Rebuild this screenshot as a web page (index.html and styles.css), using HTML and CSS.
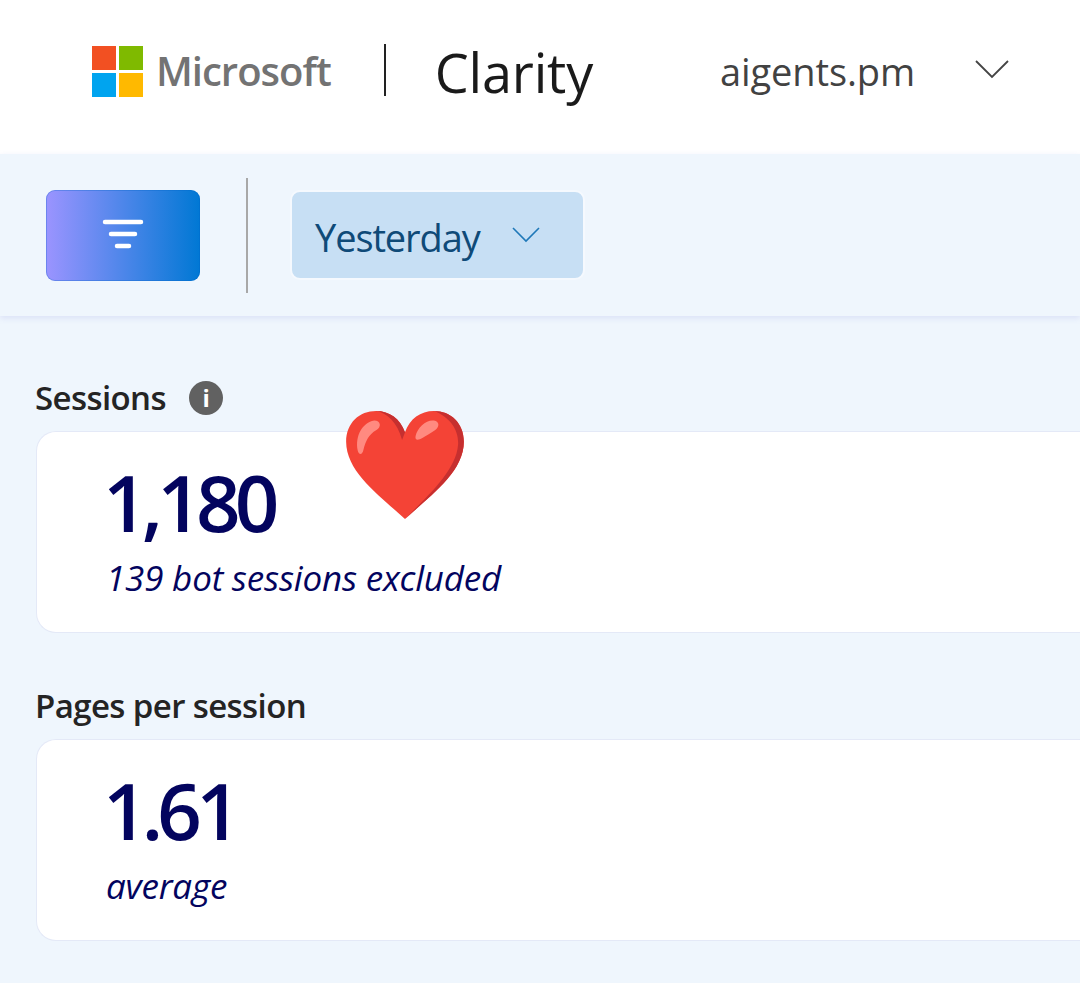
FILE: index.html
```html
<!DOCTYPE html>
<html lang="en">
<head>
    <meta charset="UTF-8">
    <meta name="viewport" content="width=device-width, initial-scale=1.0">
    <title>Microsoft Clarity</title>
    <link rel="stylesheet" href="styles.css">
</head>
<body>
    <header class="header">
        <div class="ms-logo">
            <span class="ms-red"></span>
            <span class="ms-green"></span>
            <span class="ms-blue"></span>
            <span class="ms-yellow"></span>
        </div>
        <span class="ms-name">Microsoft</span>
        <span class="header-divider"></span>
        <span class="product-name">Clarity</span>
        <span class="project-name">aigents.pm</span>
        <svg class="project-chevron" width="34" height="20" viewBox="0 0 34 20">
            <path d="M1 2 L17 18 L33 2" fill="none" stroke="#444" stroke-width="1.8"/>
        </svg>
    </header>

    <section class="toolbar">
        <button class="filter-btn">
            <svg width="42" height="32" viewBox="0 0 42 32">
                <path d="M3 3 H39 M9 15 H33 M15 27 H27" fill="none" stroke="#fff" stroke-width="4.5" stroke-linecap="round"/>
            </svg>
        </button>
        <span class="toolbar-divider"></span>
        <button class="date-btn">
            <span class="date-label">Yesterday</span>
            <svg width="28" height="16" viewBox="0 0 28 16">
                <path d="M1 1 L14 14 L27 1" fill="none" stroke="#1f78b8" stroke-width="1.6"/>
            </svg>
        </button>
    </section>

    <main class="content">
        <section class="metric">
            <h2 class="metric-title">
                Sessions
                <span class="info-icon">i</span>
            </h2>
            <div class="metric-card">
                <div class="metric-value">1,180</div>
                <div class="metric-note">139 bot sessions excluded</div>
            </div>
        </section>

        <section class="metric">
            <h2 class="metric-title">Pages per session</h2>
            <div class="metric-card">
                <div class="metric-value">1.61</div>
                <div class="metric-note">average</div>
            </div>
        </section>
    </main>

    <!-- heart sticker sits on top of the first card -->
    <svg class="heart" width="120" height="110" viewBox="0 0 124 114">
        <path d="M62 113 C40 92 1 66 1 33 C1 13 15 1 32 1 C46 1 57 9 62 23 C67 9 78 1 92 1 C109 1 123 13 123 33 C123 66 84 92 62 113 Z" fill="#f44336"/>
        <path d="M62 113 C84 92 123 66 123 33 C123 13 109 1 92 1 C108 7 118 20 117 36 C115 64 82 92 62 113 Z M62 23 C57 9 46 1 32 1 C44 3 54 13 59 31 Z" fill="#c62f2f"/>
        <path d="M13 42 C10 27 18 13 30 11 C37 11 38 18 32 21 C25 25 21 32 19 41 C18 47 14 47 13 42 Z" fill="#ff8a80"/>
        <path d="M73 27 C75 18 84 10 92 11 C98 12 98 18 93 21 C88 24 84 27 80 29 C75 32 72 31 73 27 Z" fill="#ff8a80"/>
    </svg>
</body>
</html>
```

FILE: styles.css
```css
/* Reset and base styles */
* {
    margin: 0;
    padding: 0;
    box-sizing: border-box;
}

body {
    width: 1080px;
    height: 983px;
    overflow: hidden;
    position: relative;
    font-family: "Open Sans", "Noto Sans", sans-serif;
    background: #eff6fd;
    color: #242424;
}

/* Header */
.header {
    height: 154px;
    background: #fff;
    display: flex;
    align-items: center;
    padding-left: 92px;
}

.ms-logo {
    display: grid;
    grid-template-columns: 24px 24px;
    grid-template-rows: 24px 24px;
    gap: 3px;
    margin-top: -12px;
}

.ms-red { background: #f25022; }
.ms-green { background: #7fba00; }
.ms-blue { background: #00a4ef; }
.ms-yellow { background: #ffb900; }

.ms-name {
    margin-left: 13px;
    margin-top: -14px;
    font-size: 40px;
    font-weight: 600;
    letter-spacing: -1px;
    color: #737373;
}

.header-divider {
    width: 2px;
    height: 52px;
    margin-left: 53px;
    margin-top: -14px;
    background: #222;
}

.product-name {
    margin-left: 49px;
    margin-top: -10px;
    font-size: 54px;
    letter-spacing: -0.2px;
    color: #1a1a1a;
}

.project-name {
    margin-left: 127px;
    margin-top: -12px;
    font-size: 38px;
    letter-spacing: -0.1px;
    color: #424242;
}

.project-chevron {
    margin-left: 60px;
    margin-top: -16px;
}

/* Toolbar */
.toolbar {
    height: 162px;
    display: flex;
    align-items: center;
    padding-left: 46px;
    background: #eff6fd;
    box-shadow: 0 2px 6px rgba(120, 130, 220, 0.18);
}

.filter-btn {
    width: 154px;
    height: 91px;
    display: flex;
    align-items: center;
    justify-content: center;
    border: none;
    border-radius: 9px;
    background: linear-gradient(90deg, #9b94ff, #0078d4);
    box-shadow: inset 0 0 0 1px rgba(0, 100, 200, 0.3);
}

.toolbar-divider {
    width: 2px;
    height: 115px;
    margin-left: 46px;
    background: #a8a8a8;
}

.date-btn {
    width: 295px;
    height: 90px;
    margin-left: 42px;
    display: flex;
    align-items: center;
    gap: 32px;
    padding-left: 23px;
    border: 2px solid #f5f9fe;
    border-radius: 10px;
    background: #c7dff4;
    font-family: inherit;
    font-size: 38px;
    letter-spacing: -1.1px;
    color: #0f4a78;
}

.date-label {
    margin-top: 4px;
}

/* Metric cards */
.content {
    padding: 60px 0 0 36px;
}

.metric {
    margin-bottom: 51px;
}

.metric-title {
    display: flex;
    align-items: center;
    gap: 23px;
    height: 55px;
    padding-bottom: 12px;
    font-size: 33px;
    font-weight: 600;
    letter-spacing: -0.6px;
    margin-left: -1px;
}

.info-icon {
    width: 34px;
    height: 34px;
    display: flex;
    align-items: center;
    justify-content: center;
    border-radius: 50%;
    background: #616161;
    color: #fff;
    font-size: 24px;
    font-weight: 700;
}

/* cards run off the right edge of the window */
.metric-card {
    height: 202px;
    padding: 18px 0 0 69px;
    background: #fff;
    border: 1px solid #e4e9f7;
    border-right: none;
    border-radius: 20px 0 0 20px;
}

.metric-value {
    margin-left: -3px;
    font-size: 78px;
    line-height: 104px;
    font-weight: 600;
    letter-spacing: -5.8px;
    color: #03045e;
}

.metric-note {
    font-size: 35px;
    line-height: 48px;
    font-style: italic;
    letter-spacing: -0.2px;
    color: #03045e;
}

.heart {
    position: absolute;
    left: 345px;
    top: 410px;
}
```
